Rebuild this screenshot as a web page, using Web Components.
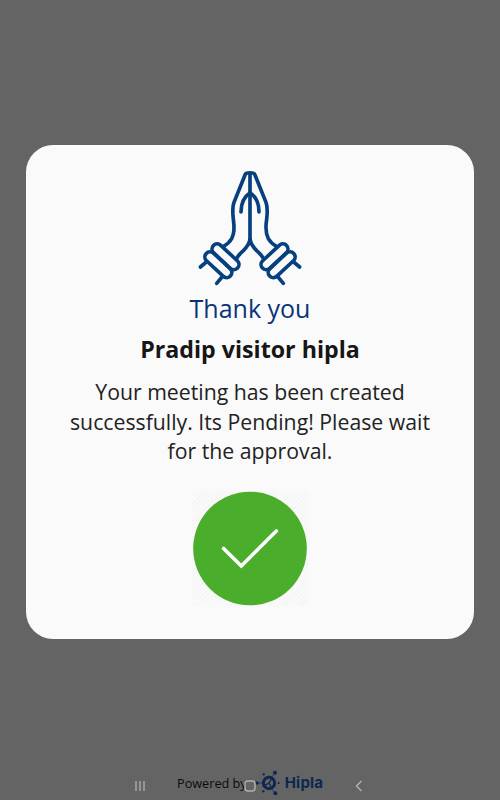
<!DOCTYPE html>
<html lang="en">
<head>
<meta charset="utf-8">
<meta name="viewport" content="width=device-width, initial-scale=1">
<title>Thank you</title>
<style>
	html, body {
		margin: 0;
		height: 100%;
	}

	body {
		font-family: "Open Sans", sans-serif;
		background: #646464;
		overflow: hidden;
	}
</style>
</head>
<body>
<visitor-screen>
	<thank-you-card>
		<namaste-icon slot="icon"></namaste-icon>
		<span slot="title">Thank you</span>
		<span slot="name">Pradip visitor hipla</span>
		<span slot="message">Your meeting has been created<br>successfully. Its Pending! Please wait<br>for the approval.</span>
		<success-badge slot="status"></success-badge>
	</thank-you-card>
	<powered-by slot="footer">Powered by</powered-by>
	<system-nav slot="nav"></system-nav>
</visitor-screen>

<script>
class VisitorScreen extends HTMLElement {
	connectedCallback() {
		this.attachShadow({ mode: 'open' }).innerHTML = `
			<style>
				:host {
					display: flex;
					flex-direction: column;
					align-items: center;
					position: relative;
					box-sizing: border-box;
					width: 500px;
					height: 800px;
					padding-top: 145.3px;
				}

				footer {
					margin-top: auto;
					width: 100%;
				}
			</style>
			<slot></slot>
			<footer><slot name="footer"></slot></footer>
			<slot name="nav"></slot>
		`;
	}
}

class ThankYouCard extends HTMLElement {
	connectedCallback() {
		this.attachShadow({ mode: 'open' }).innerHTML = `
			<style>
				:host {
					display: flex;
					flex-direction: column;
					align-items: center;
					box-sizing: border-box;
					width: 448.5px;
					height: 494px;
					padding-top: 15px;
					border-radius: 27px;
					background: #fafafa;
					color: #161616;
					text-align: center;
					white-space: nowrap;
				}

				h1, h2, p {
					margin: 0;
				}

				h1 {
					font-size: 25px;
					font-weight: 400;
					line-height: 36px;
					color: #0a3478;
				}

				h2 {
					margin-top: 5px;
					font-size: 23.2px;
					font-weight: 700;
					line-height: 36px;
				}

				p {
					margin-top: 10px;
					font-size: 21.25px;
					line-height: 29.3px;
					color: #222;
				}

				.status {
					margin-top: 26px;
				}
			</style>
			<slot name="icon"></slot>
			<h1><slot name="title"></slot></h1>
			<h2><slot name="name"></slot></h2>
			<p><slot name="message"></slot></p>
			<div class="status"><slot name="status"></slot></div>
		`;
	}
}

class NamasteIcon extends HTMLElement {
	connectedCallback() {
		// one hand with its cuff, mirrored for the other side
		const hand = `
			<path d="M180 39H173Q167 39 165 45L132 127Q126 143 130 178Q136 215 125 236Q117 250 101 259"/>
			<path d="M180 98Q153 116 153 156"/>
			<path d="M180 238Q178 254 160 272Q145 285 139 297"/>
			<rect x="-49.5" y="-15.5" width="99" height="31" rx="15.5" transform="translate(106.5 290.5) rotate(43)"/>
			<rect x="-49.5" y="-15.5" width="99" height="31" rx="15.5" transform="translate(85 314) rotate(43)"/>
			<path d="M31 321L49 306M80 370L96 351"/>
		`;

		this.attachShadow({ mode: 'open' }).innerHTML = `
			<style>
				:host {
					display: block;
					height: 130px;
				}

				svg {
					display: block;
				}
			</style>
			<svg width="120" height="130" viewBox="0 0 360 390" fill="none" stroke="#07407f" stroke-width="11" stroke-linecap="round" stroke-linejoin="round">
				<g>${hand}</g>
				<g transform="translate(360 0) scale(-1 1)">${hand}</g>
				<path d="M180 39V240"/>
			</svg>
		`;
	}
}

class SuccessBadge extends HTMLElement {
	connectedCallback() {
		this.attachShadow({ mode: 'open' }).innerHTML = `
			<style>
				:host {
					display: block;
					width: 116px;
					height: 115px;
					background: repeating-linear-gradient(135deg, #f4f4f4 0 1px, #fafafa 1px 3px);
				}

				svg {
					display: block;
				}
			</style>
			<svg width="116" height="115" viewBox="0 0 116 115" fill="none">
				<circle cx="58" cy="57.5" r="56.8" fill="#4aae2c"/>
				<path d="M31.6 57.5L49.3 75L84.3 40" stroke="#fff" stroke-width="3.6" stroke-linecap="round"/>
			</svg>
		`;
	}
}

class PoweredBy extends HTMLElement {
	connectedCallback() {
		this.attachShadow({ mode: 'open' }).innerHTML = `
			<style>
				:host {
					display: flex;
					align-items: center;
					height: 35px;
					padding-left: 177px;
					font-size: 12.7px;
					color: #0b0b0b;
				}

				svg {
					margin-left: 7px;
				}

				b {
					margin-left: 3px;
					font: 700 15px Inter, sans-serif;
					letter-spacing: .2px;
					color: #0d2750;
				}
			</style>
			<slot></slot>
			<svg width="28" height="26" viewBox="0 0 84 78" fill="#0d2750" stroke="#0d2750">
				<circle cx="45" cy="39" r="17" fill="none" stroke-width="9"/>
				<path d="M45 39L32 47M45 39L53 26M45 39L52 53" stroke-width="4"/>
				<path d="M10 39H27M53 22L62 9M53 56L63 69" stroke-width="2"/>
				<g stroke="none">
					<circle cx="9" cy="39" r="5"/>
					<circle cx="63" cy="8" r="6"/>
					<circle cx="64" cy="70" r="6"/>
					<circle cx="29" cy="13" r="3.5"/>
					<circle cx="28" cy="64" r="3.5"/>
					<circle cx="74" cy="39" r="3"/>
				</g>
			</svg>
			<b>Hipla</b>
		`;
	}
}

class SystemNav extends HTMLElement {
	connectedCallback() {
		this.attachShadow({ mode: 'open' }).innerHTML = `
			<style>
				/* the system bar floats over the page footer */
				:host {
					display: flex;
					justify-content: space-between;
					align-items: center;
					position: absolute;
					left: 134px;
					bottom: 8px;
					width: 231px;
					height: 12px;
				}
			</style>
			<svg width="12" height="12" fill="none" stroke="#b0b0b0" stroke-width="1.3">
				<path d="M2 1V11M6 1V11M10 1V11"/>
			</svg>
			<svg width="12" height="12" fill="none" stroke="#b0b0b0" stroke-width="1.5">
				<rect x="1" y="1" width="10" height="10" rx="3"/>
			</svg>
			<svg width="12" height="12" fill="none" stroke="#b0b0b0" stroke-width="1.5">
				<path d="M8.5 1L3.5 6L8.5 11"/>
			</svg>
		`;
	}
}

customElements.define('visitor-screen', VisitorScreen);
customElements.define('thank-you-card', ThankYouCard);
customElements.define('namaste-icon', NamasteIcon);
customElements.define('success-badge', SuccessBadge);
customElements.define('powered-by', PoweredBy);
customElements.define('system-nav', SystemNav);
</script>
</body>
</html>
